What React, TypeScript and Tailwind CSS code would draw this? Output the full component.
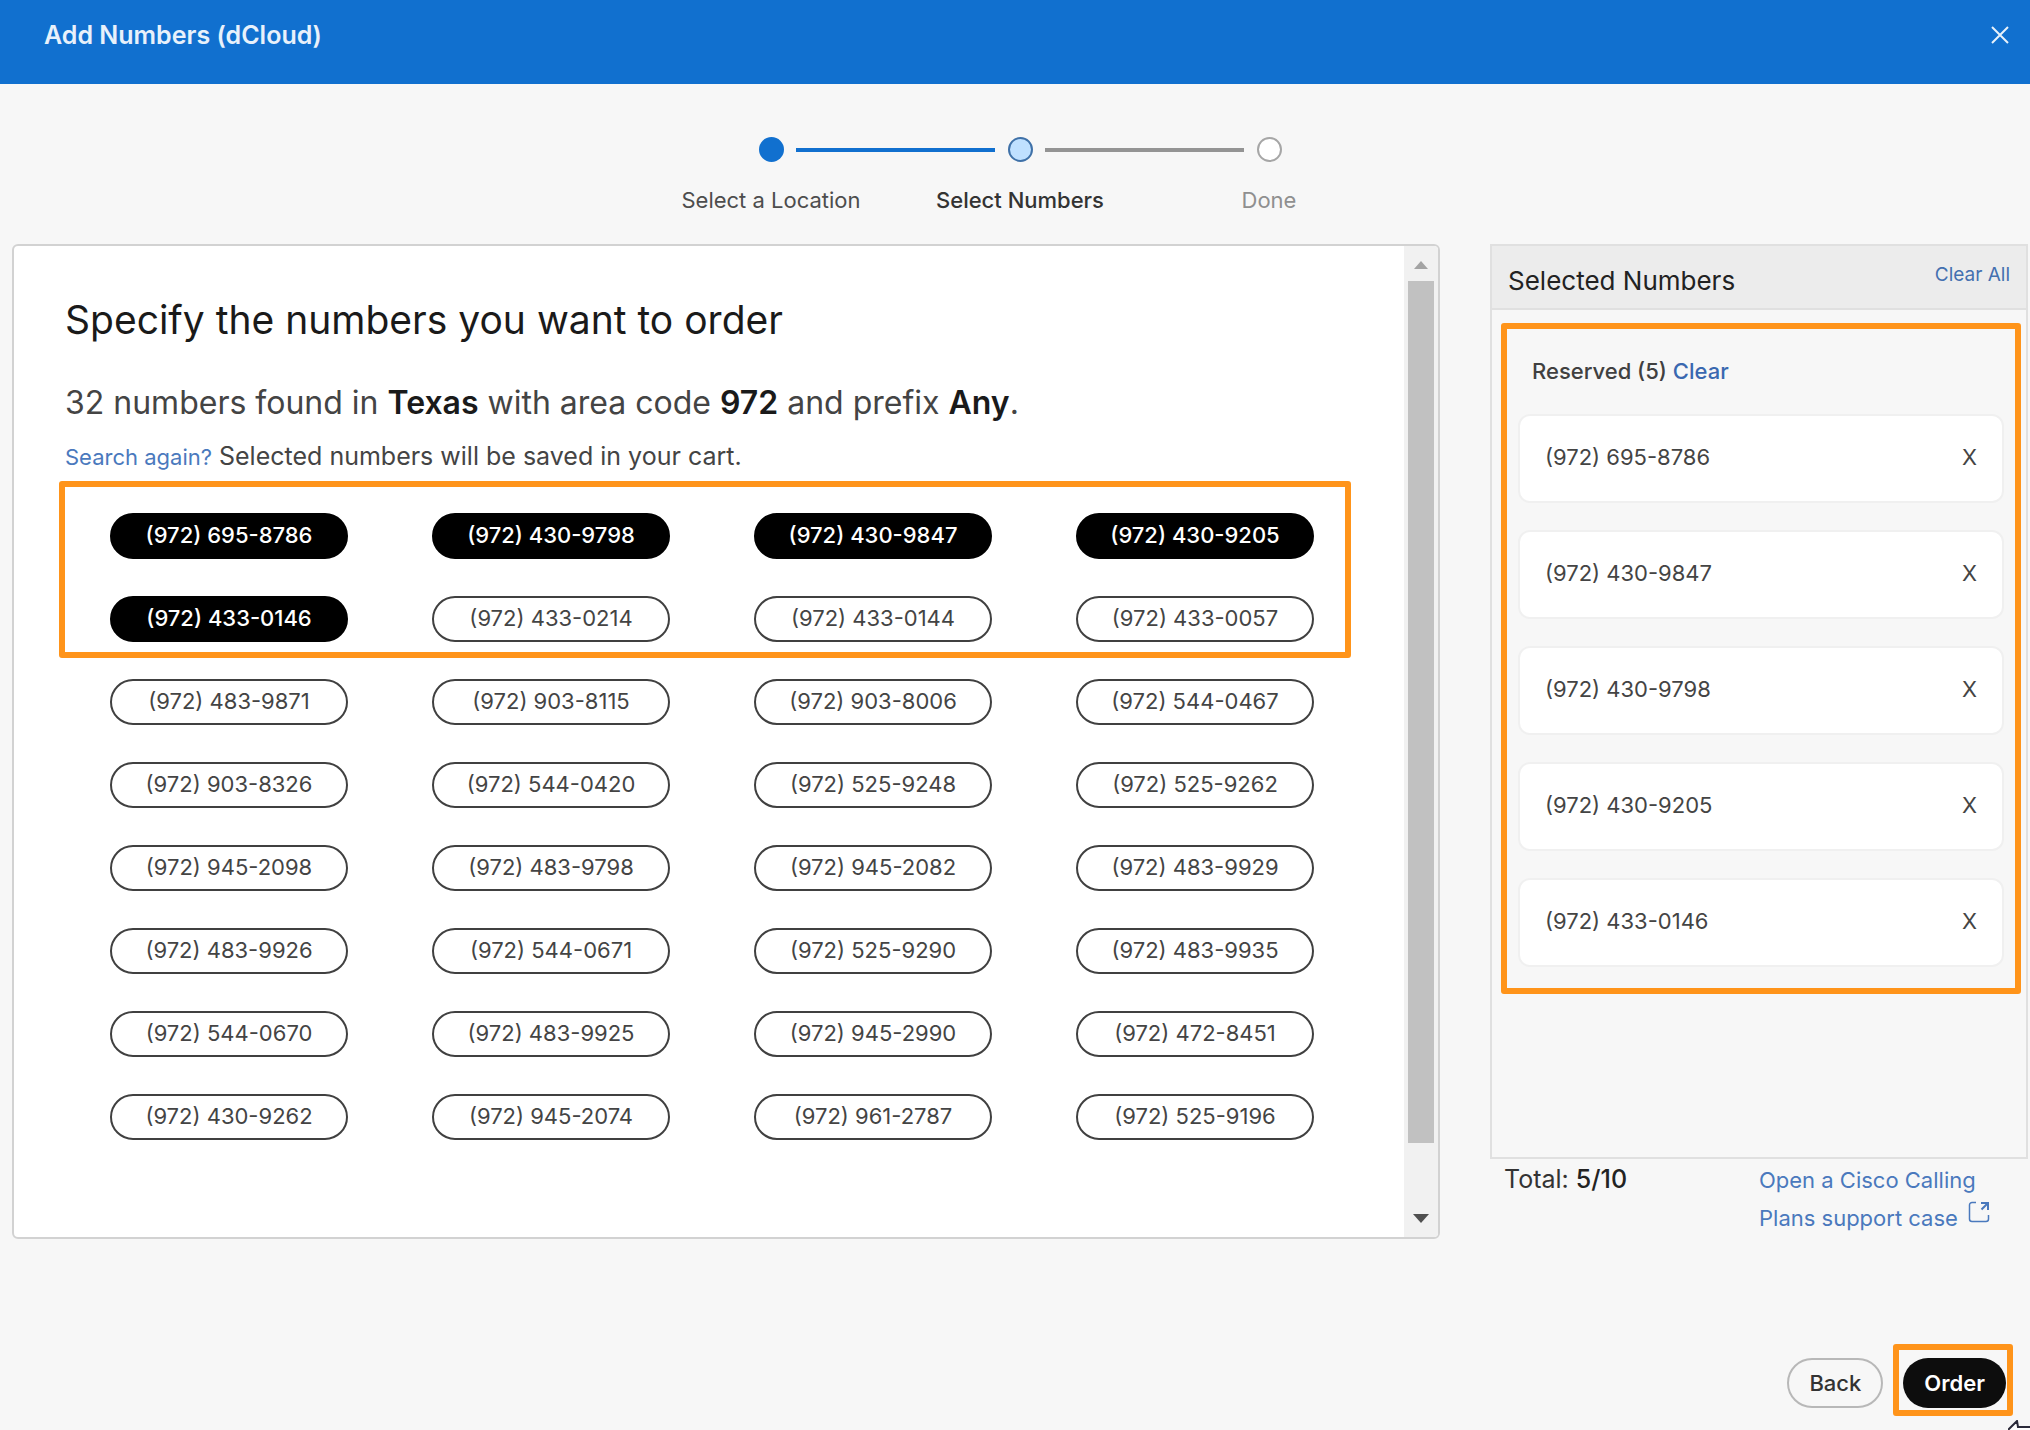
import { useState } from "react";

const STEPS = [
  { label: "Select a Location", state: "done" },
  { label: "Select Numbers", state: "current" },
  { label: "Done", state: "upcoming" },
];

const NUMBERS = [
  "(972) 695-8786", "(972) 430-9798", "(972) 430-9847", "(972) 430-9205",
  "(972) 433-0146", "(972) 433-0214", "(972) 433-0144", "(972) 433-0057",
  "(972) 483-9871", "(972) 903-8115", "(972) 903-8006", "(972) 544-0467",
  "(972) 903-8326", "(972) 544-0420", "(972) 525-9248", "(972) 525-9262",
  "(972) 945-2098", "(972) 483-9798", "(972) 945-2082", "(972) 483-9929",
  "(972) 483-9926", "(972) 544-0671", "(972) 525-9290", "(972) 483-9935",
  "(972) 544-0670", "(972) 483-9925", "(972) 945-2990", "(972) 472-8451",
  "(972) 430-9262", "(972) 945-2074", "(972) 961-2787", "(972) 525-9196",
];

const INITIAL = [
  "(972) 695-8786",
  "(972) 430-9847",
  "(972) 430-9798",
  "(972) 430-9205",
  "(972) 433-0146",
];

function Stepper() {
  const dot: Record<string, string> = {
    done: "bg-[#1170cf]",
    current: "border-2 border-[#3f71a8] bg-[#bfe0ff]",
    upcoming: "border-2 border-[#a6a6a6] bg-white",
  };
  const label: Record<string, string> = {
    done: "text-[#4d4d4d]",
    current: "font-medium text-[#333333]",
    upcoming: "text-[#8f8f8f]",
  };
  return (
    <ol className="ml-2.5 flex justify-center pt-[53px]">
      {STEPS.map((s, i) => (
        <li key={s.label} className="relative flex w-[249px] flex-col items-center gap-6">
          <span className={`size-[25px] rounded-full ${dot[s.state]}`} />
          {i > 0 && (
            <span
              className={`absolute top-[11px] right-1/2 mr-[25px] h-1 w-[199px] ${
                s.state === "current" ? "bg-[#1170cf]" : "bg-[#949494]"
              }`}
            />
          )}
          <span className={`text-[22px] leading-7 whitespace-nowrap ${label[s.state]}`}>{s.label}</span>
        </li>
      ))}
    </ol>
  );
}

function ScrollBar() {
  return (
    <div className="flex w-[34px] shrink-0 flex-col items-center justify-between rounded-r bg-[#f1f1f1]" aria-hidden="true">
      <svg className="h-[35px] w-4" viewBox="0 0 16 35">
        <path d="M1 23L8 15L15 23Z" fill="#a3a3a3" />
      </svg>
      <div className="h-[862px] w-[26px] bg-[#c1c1c1]" />
      <div className="flex-1" />
      <svg className="h-9 w-4" viewBox="0 0 16 36">
        <path d="M0 13L8 22L16 13Z" fill="#505050" />
      </svg>
    </div>
  );
}

export default function App() {
  const [selected, setSelected] = useState(INITIAL);
  const remove = (n: string) => setSelected((s) => s.filter((x) => x !== n));
  const toggle = (n: string) =>
    setSelected((s) => (s.includes(n) ? s.filter((x) => x !== n) : s.length < 10 ? [...s, n] : s));

  return (
    <div className="relative flex min-h-screen flex-col overflow-hidden bg-[#f7f7f7] font-['Inter',sans-serif] text-[#333333]">
      <header className="flex h-[84px] items-start justify-between bg-[#1170cf] pt-[17px] pr-5 pl-11 text-[#e8f1fb]">
        <h1 className="text-[25px] leading-9 font-semibold">Add Numbers (dCloud)</h1>
        <button type="button" aria-label="Close" className="flex h-9 w-5 items-center justify-center">
          <svg className="size-[18px]" viewBox="0 0 18 18" fill="none" stroke="currentColor" strokeWidth="2">
            <path d="M1 1L17 17M17 1L1 17" />
          </svg>
        </button>
      </header>

      <Stepper />

      <main className="grid grid-cols-[minmax(0,1fr)_538px] items-start gap-[50px] pt-[30px] pr-0.5 pl-3">
        <section className="flex items-stretch rounded-md border-2 border-[#d2d2d2] bg-white">
          <div className="min-w-0 flex-1 pt-[48px] pb-[97px]">
            <h2 className="pl-[51px] text-[39px] leading-[52px] text-[#1a1a1a]">Specify the numbers you want to order</h2>
            <p className="mt-[29px] pl-[51px] text-[32px] leading-[56px] text-[#444444]">
              32 numbers found in <b className="font-semibold text-[#1a1a1a]">Texas</b> with area code{" "}
              <b className="font-semibold text-[#1a1a1a]">972</b> and prefix{" "}
              <b className="font-semibold text-[#1a1a1a]">Any</b>.
            </p>
            <p className="mt-[3px] pl-[51px] text-[25px] leading-[44px] text-[#444444]">
              <a href="#search" className="text-[22px] text-[#4a79bd]">Search again?</a> Selected numbers will be saved in your cart.
            </p>
            <div className="relative mt-[34px] mr-[90px] ml-[96px]">
              <div className="pointer-events-none absolute -top-8 -right-[37px] -left-[51px] h-[177px] rounded-[3px] border-6 border-[#ff941a]" />
              <div className="grid grid-cols-[repeat(4,238px)] justify-between gap-y-[37px]">
                {NUMBERS.map((n) => {
                  const on = selected.includes(n);
                  return (
                    <button
                      key={n}
                      type="button"
                      aria-pressed={on}
                      onClick={() => toggle(n)}
                      className={`h-[46px] rounded-full border-2 pb-0.5 text-[22px] leading-7 ${
                        on ? "border-black bg-black font-medium text-white" : "border-[#404040] bg-white text-[#444444]"
                      }`}
                    >
                      {n}
                    </button>
                  );
                })}
              </div>
            </div>
          </div>
          <ScrollBar />
        </section>

        <aside>
          <div className="border-2 border-[#e0e0e0]">
            <div className="flex h-[64px] items-start justify-between border-b-2 border-[#e0e0e0] bg-[#ececec] px-4">
              <h2 className="pt-[17px] text-[26px] leading-9 text-[#222222]">Selected Numbers</h2>
              <button type="button" onClick={() => setSelected([])} className="pt-[15px] text-[19px] leading-7 text-[#4470b0]">
                Clear All
              </button>
            </div>
            <div className="min-h-[847px] pt-[13px] pr-[5px] pl-[9px]">
              <div className="rounded-[3px] border-6 border-[#ff941a] px-[11px] pt-6 pb-[21px]">
                <p className="pl-[14px] text-[22px] leading-9 font-medium text-[#404040]">
                  Reserved ({selected.length}){" "}
                  <button type="button" onClick={() => setSelected([])} className="text-[#3a68b0]">
                    Clear
                  </button>
                </p>
                <ul className="mt-[25px] flex flex-col gap-[27px]">
                  {selected.map((n) => (
                    <li
                      key={n}
                      className="flex h-[89px] items-center justify-between rounded-xl border-2 border-[#f0f0f0] bg-white px-[25px] pb-1 text-[22px] leading-7 text-[#444444]"
                    >
                      {n}
                      <button type="button" aria-label={`Remove ${n}`} onClick={() => remove(n)}>
                        X
                      </button>
                    </li>
                  ))}
                </ul>
              </div>
            </div>
          </div>
          <div className="flex justify-between pr-9 pl-3.5">
            <p className="pt-0.5 text-[25px] leading-9">
              Total: <span className="font-medium text-[#222222]">{selected.length}/10</span>
            </p>
            <a href="#support" className="w-[233px] pt-0.5 text-[22px] leading-[38px] whitespace-nowrap text-[#4a79bd]">
              Open a Cisco Calling
              <br />
              Plans support case
              <svg className="mb-4 ml-2.5 inline-block size-[22px]" viewBox="0 0 22 22" fill="none" stroke="currentColor">
                <path d="M8 1.500H4A2.500 2.500 0 0 0 1.500 4V18A2.500 2.500 0 0 0 4 20.500H18A2.500 2.500 0 0 0 20.500 18V14" strokeWidth="1.500" />
                <path d="M13 2H20V9M20 2L13.500 8.500" strokeWidth="2" />
              </svg>
            </a>
          </div>
        </aside>
      </main>

      <footer className="mt-auto flex items-end justify-end gap-2.5 pr-[17px] pb-3.5">
        <button type="button" className="mb-2 h-[50px] rounded-full border-2 border-[#b8b8b8] px-5 text-[22px] leading-7 font-medium text-[#333333]">
          Back
        </button>
        <div className="rounded-[3px] border-6 border-[#ff941a] pt-2 pr-px pb-0.5 pl-1">
          <button type="button" className="block h-[50px] rounded-full bg-[#0d0d0d] px-[21px] text-[22px] leading-7 font-semibold text-white">
            Order
          </button>
        </div>
      </footer>
      <svg className="absolute right-0 bottom-0 h-2.5 w-[22px]" viewBox="0 0 22 10" fill="white" stroke="#2b2b3a" strokeWidth="2">
        <path d="M0 10L9 1L10 7H24V12H0Z" />
      </svg>
    </div>
  );
}
